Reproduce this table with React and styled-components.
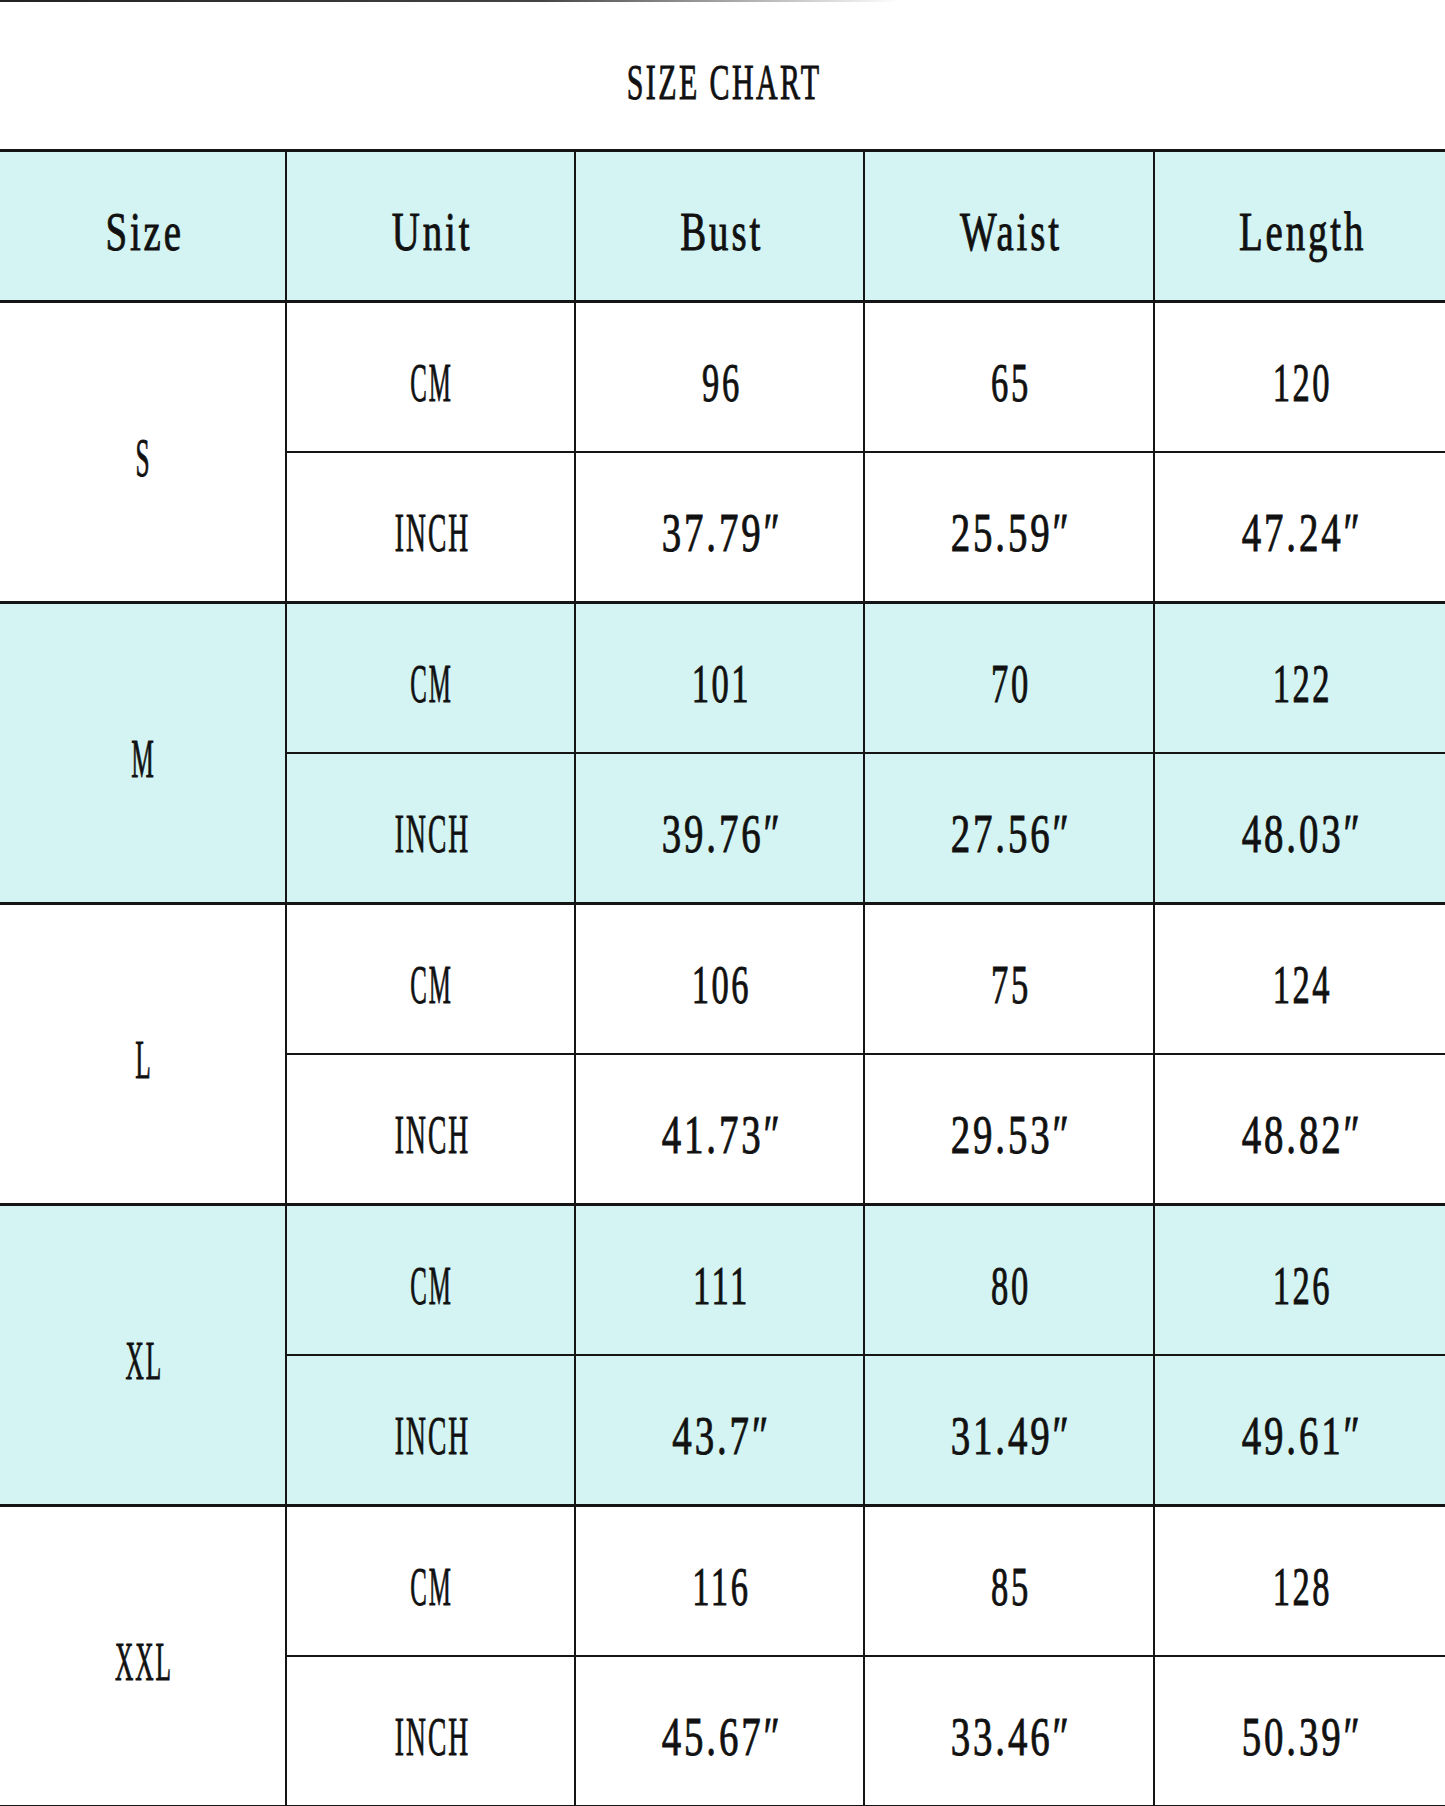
import styled, { createGlobalStyle } from 'styled-components';

const GlobalStyle = createGlobalStyle`
  html, body {
    margin: 0;
    padding: 0;
    background: #fff;
  }
  body {
    font-family: "Liberation Serif", "Times New Roman", serif;
    color: #111;
  }
`;

const rows = [
  { size: 'S', cm: ['96', '65', '120'], inch: ['37.79″', '25.59″', '47.24″'] },
  { size: 'M', cm: ['101', '70', '122'], inch: ['39.76″', '27.56″', '48.03″'], tint: true },
  { size: 'L', cm: ['106', '75', '124'], inch: ['41.73″', '29.53″', '48.82″'] },
  { size: 'XL', cm: ['111', '80', '126'], inch: ['43.7″', '31.49″', '49.61″'], tint: true },
  { size: 'XXL', cm: ['116', '85', '128'], inch: ['45.67″', '33.46″', '50.39″'] },
];

const widths = [286, 289, 289, 290, 291];

function App() {
  return (
    <>
      <GlobalStyle />
      <Page>
        <TopRule />
        <TitleBar>
          <Squeeze $scale={0.6} $size={50}>SIZE CHART</Squeeze>
        </TitleBar>
        <Chart>
          <colgroup>
            {widths.map((w, i) => (
              <col key={i} style={{ width: w }} />
            ))}
          </colgroup>
          <thead>
            <tr>
              {['Size', 'Unit', 'Bust', 'Waist', 'Length'].map((h) => (
                <Head key={h}>
                  <Squeeze $scale={0.72}>{h}</Squeeze>
                </Head>
              ))}
            </tr>
          </thead>
          <tbody>
            {rows.map((r) => (
              <Group key={r.size} r={r} />
            ))}
          </tbody>
        </Chart>
      </Page>
    </>
  );
}

function Group({ r }) {
  return (
    <>
      <tr>
        <Cell rowSpan={2} $tint={r.tint} $first>
          <Squeeze $scale={0.47}>{r.size}</Squeeze>
        </Cell>
        <Cell $tint={r.tint} $first>
          <Squeeze $scale={0.46}>CM</Squeeze>
        </Cell>
        {r.cm.map((v, i) => (
          <Cell key={i} $tint={r.tint} $first>
            <Squeeze $scale={0.64}>{v}</Squeeze>
          </Cell>
        ))}
      </tr>
      <tr>
        <Cell $tint={r.tint}>
          <Squeeze $scale={0.51}>INCH</Squeeze>
        </Cell>
        {r.inch.map((v, i) => (
          <Cell key={i} $tint={r.tint}>
            <Squeeze $scale={0.72}>{v}</Squeeze>
          </Cell>
        ))}
      </tr>
    </>
  );
}

export default App;

const Page = styled.div`
  width: 1445px;
  height: 1806px;
  overflow: hidden;
  background: #fff;
`;

const TopRule = styled.div`
  height: 2px;
  width: 900px;
  background: linear-gradient(to right, #222 0%, #444 60%, rgba(0, 0, 0, 0) 100%);
`;

const TitleBar = styled.div`
  height: 147px;
  display: flex;
  align-items: center;
  justify-content: center;
  box-sizing: border-box;
`;

const Squeeze = styled.span`
  display: inline-block;
  white-space: nowrap;
  padding: 12px 0 0 6px;
  font-size: ${(p) => p.$size || 54}px;
  font-weight: 400;
  letter-spacing: 4px;
  -webkit-text-stroke: 0.9px #111;
  line-height: 1;
  transform: scaleX(${(p) => p.$scale});
  transform-origin: center;
`;

const Chart = styled.table`
  width: 1445px;
  border-collapse: collapse;
  table-layout: fixed;
`;

const Head = styled.th`
  height: 148px;
  padding: 0;
  font-weight: normal;
  text-align: center;
  vertical-align: middle;
  background: #d3f4f2;
  border: 2px solid #151515;
  border-top-width: 3px;
  border-bottom-width: 3px;
  &:first-child { border-left: none; }
  &:last-child { border-right: none; }
`;

const Cell = styled.td`
  height: 148px;
  padding: 0;
  text-align: center;
  vertical-align: middle;
  background: ${(p) => (p.$tint ? '#d3f4f2' : '#fff')};
  border: 2px solid #151515;
  border-top-width: ${(p) => (p.$first ? 3 : 2)}px;
  &:first-child { border-left: none; }
  &:last-child { border-right: none; }
`;
